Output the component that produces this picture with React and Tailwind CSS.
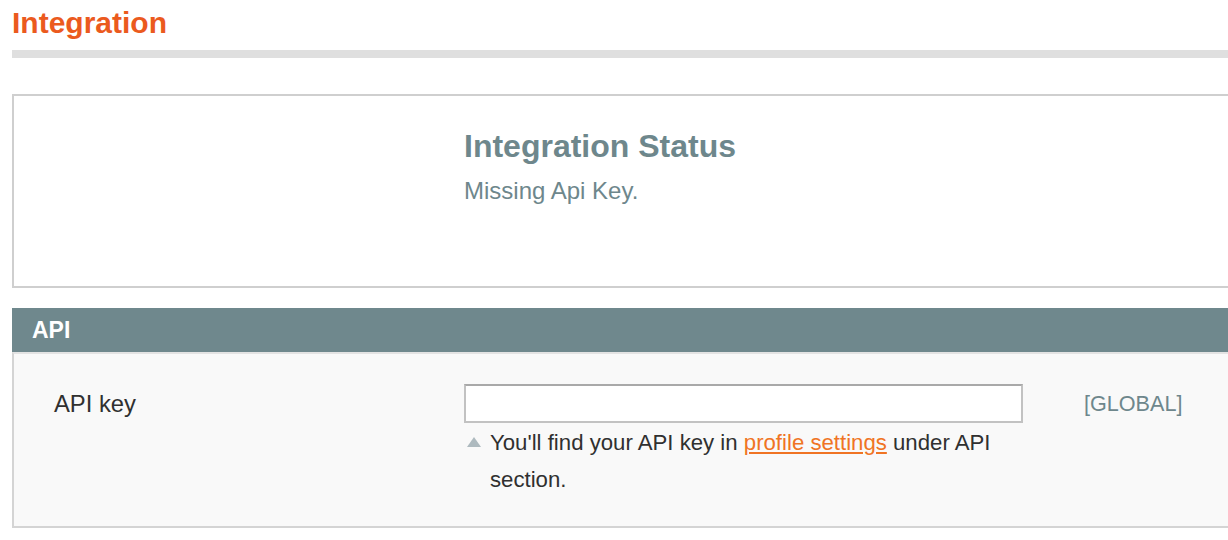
import React from 'react';

const font = { fontFamily: '"Liberation Sans", Arial, Helvetica, sans-serif' };

export default function App() {
  return (
    <div className="w-[1228px] h-[540px] overflow-hidden bg-white pl-[12px]" style={font}>
      <div className="w-[1240px]">
        <h1 className="mt-[5px] text-[30px] leading-[36px] font-bold text-[#eb5a1e]">Integration</h1>
        <div className="mt-[9px] h-[8px] bg-[#dfdfdf]" />

        <div className="mt-[36px] h-[194px] border-2 border-[#cfcfcf] pl-[450px] pt-[30px]">
          <h2 className="text-[32px] leading-[40px] font-bold text-[#6e878c]">Integration Status</h2>
          <p className="mt-[10px] text-[24px] leading-[30px] text-[#6e878c]">Missing Api Key.</p>
        </div>

        <div className="mt-[20px] h-[44px] bg-[#6f888d] pl-[20px] flex items-center">
          <span className="text-[23px] font-bold text-white">API</span>
        </div>
        <div className="h-[176px] bg-[#f9f9f9] border-2 border-[#d4d4d4] border-t-[#e3e3e3] pt-[30px]">
          <div className="flex items-start">
            <label className="w-[450px] pl-[40px] pt-[5px] text-[23.8px] leading-[30px] text-[#303030]">API key</label>
            <div className="w-[560px]">
              <input type="text" className="block w-[559px] h-[39px] bg-white border-2 border-[#c2c2c2] border-t-[#a9a9a9] outline-none" />
              <div className="mt-[1px] flex items-start text-[22.2px] leading-[37px] text-[#303030]">
                <span className="w-[26px] shrink-0 pl-[3px] pt-[13px]">
                  <svg width="14" height="10" viewBox="0 0 14 10" className="block">
                    <polygon points="7,0 14,10 0,10" fill="#aebabf" />
                  </svg>
                </span>
                <p className="w-[510px]">
                  You'll find your API key in{' '}
                  <a href="#" className="text-[#f07424] underline">profile settings</a>{' '}
                  under API section.
                </p>
              </div>
            </div>
            <span className="ml-[60px] pt-[5px] text-[21.6px] leading-[30px] text-[#6e878c]">[GLOBAL]</span>
          </div>
        </div>
      </div>
    </div>
  );
}
